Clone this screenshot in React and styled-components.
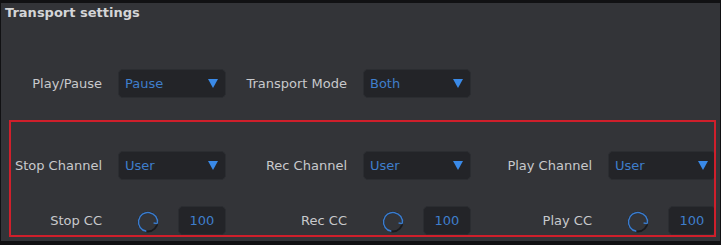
import { createGlobalStyle, styled } from 'styled-components';

const GlobalStyle = createGlobalStyle`
  html, body {
    margin: 0;
    padding: 0;
    background: #111113;
  }
  body {
    font-family: "DejaVu Sans", "Liberation Sans", sans-serif;
    font-size: 13px;
  }
`;

const Frame = styled.div`
  width: 721px;
  height: 245px;
  box-sizing: border-box;
  padding: 3px 1px 4px 1px;
  background: #111113;
`;

const Panel = styled.section`
  height: 100%;
  box-sizing: border-box;
  background: #333438;
  padding-top: 2px;
  display: flex;
  flex-direction: column;
`;

const Title = styled.h2`
  margin: 0;
  padding-left: 4px;
  font-size: 13px;
  line-height: 16px;
  font-weight: bold;
  color: #d4d5d7;
`;

const FieldRow = styled.div`
  display: grid;
  grid-template-columns: 91px 108px 105px 108px 105px 108px;
  column-gap: 16px;
  align-items: center;
  height: 29px;
  margin-top: ${(p) => p.$top || 0}px;
  padding-left: ${(p) => p.$indent || 0}px;
`;

const Label = styled.span`
  text-align: right;
  white-space: nowrap;
  color: #c8c9cc;
  line-height: 16px;
`;

const Highlight = styled.div`
  margin: 22px 4px 0 8px;
  border: 2px solid #cf1f2b;
  padding-top: 29px;
  overflow: hidden;
  display: flex;
  flex-direction: column;
  gap: 26px;
`;

const Select = styled.div`
  height: 29px;
  box-sizing: border-box;
  display: flex;
  align-items: center;
  justify-content: space-between;
  padding: 0 7px 0 6px;
  background: #232428;
  border: 1px solid #2b2d31;
  border-radius: 5px;
  color: #3f7ecc;
`;

const Caret = styled.svg`
  width: 10px;
  height: 9px;
  display: block;
`;

const CCControl = styled.div`
  display: flex;
  align-items: center;
  height: 29px;
`;

const KnobSlot = styled.div`
  width: 60px;
  display: flex;
  justify-content: center;
  align-items: center;
  padding-top: 2px;
`;

const NumberBox = styled.div`
  width: 48px;
  height: 29px;
  box-sizing: border-box;
  display: flex;
  align-items: center;
  justify-content: center;
  background: #232428;
  border: 1px solid #2b2d31;
  border-radius: 5px;
  color: #3f7ecc;
`;

function Dropdown({ value }) {
  return (
    <Select>
      <span>{value}</span>
      <Caret viewBox="0 0 10 9">
        <polygon points="0,0 10,0 5,9" fill="#3a8ae8" />
      </Caret>
    </Select>
  );
}

function Knob() {
  return (
    <svg width="22" height="22" viewBox="0 0 22 22">
      <circle cx="11" cy="11" r="9.5" fill="none" stroke="#1a1b1e" strokeWidth="1.8" />
      <path
        d="M 9.35 20.36 A 9.5 9.5 0 1 1 20.36 12.65"
        fill="none"
        stroke="#3b7ccd"
        strokeWidth="1.5"
      />
      <line x1="20.2" y1="12.6" x2="16.6" y2="12" stroke="#3b7ccd" strokeWidth="1.3" />
    </svg>
  );
}

function CC({ value }) {
  return (
    <CCControl>
      <KnobSlot>
        <Knob />
      </KnobSlot>
      <NumberBox>{value}</NumberBox>
    </CCControl>
  );
}

export default function App() {
  return (
    <>
      <GlobalStyle />
      <Frame>
        <Panel>
          <Title>Transport settings</Title>
          <FieldRow $top={48} $indent={10}>
            <Label>Play/Pause</Label>
            <Dropdown value="Pause" />
            <Label>Transport Mode</Label>
            <Dropdown value="Both" />
          </FieldRow>
          <Highlight>
            <FieldRow>
              <Label>Stop Channel</Label>
              <Dropdown value="User" />
              <Label>Rec Channel</Label>
              <Dropdown value="User" />
              <Label>Play Channel</Label>
              <Dropdown value="User" />
            </FieldRow>
            <FieldRow>
              <Label>Stop CC</Label>
              <CC value="100" />
              <Label>Rec CC</Label>
              <CC value="100" />
              <Label>Play CC</Label>
              <CC value="100" />
            </FieldRow>
          </Highlight>
        </Panel>
      </Frame>
    </>
  );
}
